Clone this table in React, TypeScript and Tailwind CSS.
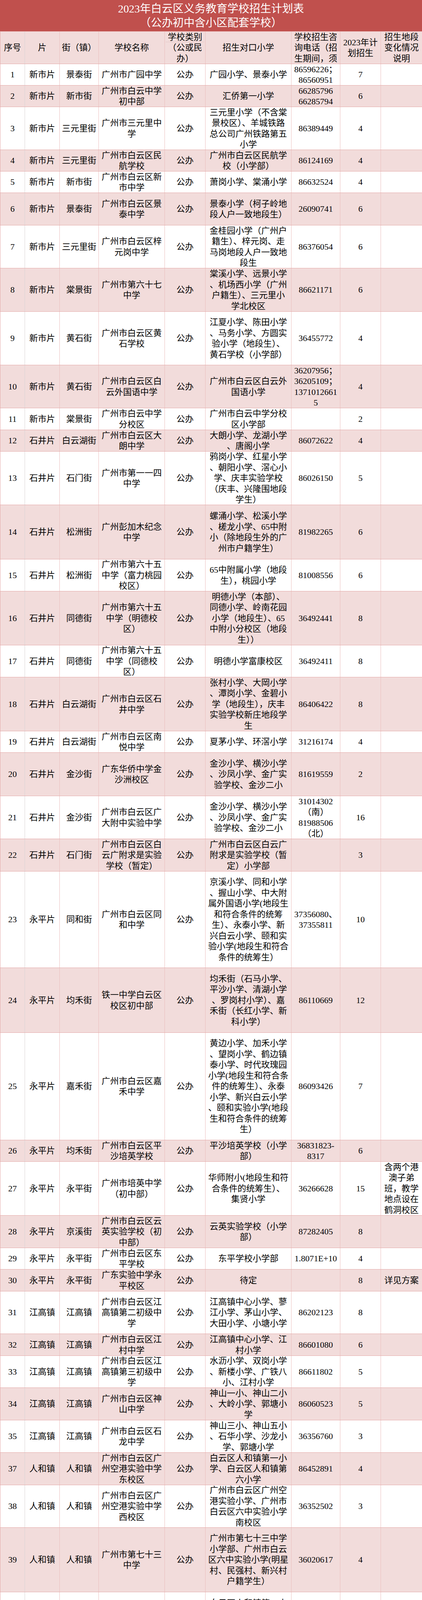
import React from "react";

interface PlanRow {
  n: string;
  p: string;
  j: string;
  s: string;
  f: string;
  t: string;
  c: string;
  note?: string;
  h: string;
}

// lines are split on "|" so the wraps match the sheet exactly
const rows: PlanRow[] = [
  { n: "1", p: "新市片", j: "景泰街", s: "广州市广园中学", f: "广园小学、景泰小学", t: "86596226；|86560951", c: "7", h: "h-[55px]" },
  { n: "2", p: "新市片", j: "新市街", s: "广州市白云中学|初中部", f: "汇侨第一小学", t: "66285796|66285794", c: "6", h: "h-[55px]" },
  { n: "3", p: "新市片", j: "三元里街", s: "广州市三元里中|学", f: "三元里小学（不含棠|景校区）、羊城铁路|总公司广州铁路第五|小学", t: "86389449", c: "4", h: "h-[110px]" },
  { n: "4", p: "新市片", j: "三元里街", s: "广州市白云区民|航学校", f: "广州市白云区民航学|校（小学部）", t: "86124169", c: "4", h: "h-[55px]" },
  { n: "5", p: "新市片", j: "新市街", s: "广州市白云区新|市中学", f: "萧岗小学、棠涌小学", t: "86632524", c: "4", h: "h-[55px]" },
  { n: "6", p: "新市片", j: "景泰街", s: "广州市白云区景|泰中学", f: "景泰小学（柯子岭地|段人户一致地段生）", t: "26090741", c: "6", h: "h-[83px]" },
  { n: "7", p: "新市片", j: "三元里街", s: "广州市白云区梓|元岗中学", f: "金桂园小学（广州户|籍生）、梓元岗、走|马岗地段人户一致地|段生", t: "86376054", c: "6", h: "h-[110px]" },
  { n: "8", p: "新市片", j: "棠景街", s: "广州市第六十七|中学", f: "棠溪小学、远景小学|、机场西小学（广州|户籍生）、三元里小|学北校区", t: "86621171", c: "6", h: "h-[111px]" },
  { n: "9", p: "新市片", j: "黄石街", s: "广州市白云区黄|石学校", f: "江夏小学、陈田小学|、马务小学、方圆实|验小学（地段生）、|黄石学校（小学部）", t: "36455772", c: "4", h: "h-[137px]" },
  { n: "10", p: "新市片", j: "黄石街", s: "广州市白云区白|云外国语中学", f: "广州市白云区白云外|国语小学", t: "36207956；|36205109；|1371012661|5", c: "4", h: "h-[110px]" },
  { n: "11", p: "新市片", j: "棠景街", s: "广州市白云中学|分校区", f: "广州市白云中学分校|区小学部", t: "", c: "2", h: "h-[56px]" },
  { n: "12", p: "石井片", j: "白云湖街", s: "广州市白云区大|朗中学", f: "大朗小学、龙湖小学|、唐阁小学", t: "86072622", c: "4", h: "h-[55px]" },
  { n: "13", p: "石井片", j: "石门街", s: "广州市第一一四|中学", f: "鸦岗小学、红星小学|、朝阳小学、滘心小|学、庆丰实验学校|（庆丰、兴隆围地段|学生）", t: "86026150", c: "5", h: "h-[137px]" },
  { n: "14", p: "石井片", j: "松洲街", s: "广州彭加木纪念|中学", f: "螺涌小学、松溪小学|、槎龙小学、65中附|小（除地段生外的广|州市户籍学生）", t: "81982265", c: "6", h: "h-[139px]" },
  { n: "15", p: "石井片", j: "松洲街", s: "广州市第六十五|中学（富力桃园|校区）", f: "65中附属小学（地段|生），桃园小学", t: "81008556", c: "6", h: "h-[82px]" },
  { n: "16", p: "石井片", j: "同德街", s: "广州市第六十五|中学（明德校|区）", f: "明德小学（本部）、|同德小学、岭南花园|小学（地段生）、65|中附小分校区（地段|生））", t: "36492441", c: "8", h: "h-[138px]" },
  { n: "17", p: "石井片", j: "同德街", s: "广州市第六十五|中学（同德校|区）", f: "明德小学富康校区", t: "36492411", c: "8", h: "h-[82px]" },
  { n: "18", p: "石井片", j: "白云湖街", s: "广州市白云区石|井中学", f: "张村小学、大岡小学|、潭岗小学、金碧小|学（地段生），庆丰|实验学校新庄地段学|生", t: "86406422", c: "8", h: "h-[138px]" },
  { n: "19", p: "石井片", j: "白云湖街", s: "广州市白云区南|悦中学", f: "夏茅小学、环滘小学", t: "31216174", c: "4", h: "h-[55px]" },
  { n: "20", p: "石井片", j: "金沙街", s: "广东华侨中学金|沙洲校区", f: "金沙小学、横沙小学|、沙凤小学、金广实|验学校、金沙二小", t: "81619559", c: "2", h: "h-[111px]" },
  { n: "21", p: "石井片", j: "金沙街", s: "广州市白云区广|大附中实验中学", f: "金沙小学、横沙小学|、沙凤小学、金广实|验学校、金沙二小", t: "31014302|（南）|81988506|（北）", c: "16", h: "h-[110px]" },
  { n: "22", p: "石井片", j: "石门街", s: "广州市白云区白|云广附求是实验|学校（暂定）", f: "广州市白云区白云广|附求是实验学校（暂|定）小学部", t: "", c: "3", h: "h-[83px]" },
  { n: "23", p: "永平片", j: "同和街", s: "广州市白云区同|和中学", f: "京溪小学、同和小学|、握山小学、中大附|属外国语小学(地段生|和符合条件的统筹|生）、永泰小学、新|兴白云小学、颐和实|验小学(地段生和符合|条件的统筹生）", t: "37356080、|37355811", c: "10", h: "h-[247px]" },
  { n: "24", p: "永平片", j: "均禾街", s: "铁一中学白云区|校区初中部", f: "均禾街（石马小学、|平沙小学、清湖小学|、罗岗村小学）、嘉|禾街（长红小学、新|科小学）", t: "86110669", c: "12", h: "h-[166px]" },
  { n: "25", p: "永平片", j: "嘉禾街", s: "广州市白云区嘉|禾中学", f: "黄边小学、加禾小学|、望岗小学、鹤边镇|泰小学、时代玫瑰园|小学(地段生和符合条|件的统筹生）、永泰|小学、新兴白云小学|、颐和实验小学(地段|生和符合条件的统筹|生）", t: "86093426", c: "7", h: "h-[275px]" },
  { n: "26", p: "永平片", j: "均禾街", s: "广州市白云区平|沙培英学校", f: "平沙培英学校（小学|部）", t: "36831823-|8317", c: "6", h: "h-[55px]" },
  { n: "27", p: "永平片", j: "永平街", s: "广州市培英中学|（初中部）", f: "华师附小(地段生和符|合条件的统筹生）、|集贤小学", t: "36266628", c: "15", note: "含两个港|澳子弟|班，教学|地点设在|鹤洞校区", h: "h-[138px]" },
  { n: "28", p: "永平片", j: "京溪街", s: "广州市白云区云|英实验学校（初|中部）", f: "云英实验学校（小学|部）", t: "87282405", c: "8", h: "h-[83px]" },
  { n: "29", p: "永平片", j: "永平街", s: "广州市白云区东|平学校", f: "东平学校小学部", t: "1.8071E+10", c: "4", h: "h-[55px]" },
  { n: "30", p: "永平片", j: "永平街", s: "广东实验中学永|平校区", f: "待定", t: "", c: "8", note: "详见方案", h: "h-[56px]" },
  { n: "31", p: "江高镇", j: "江高镇", s: "广州市白云区江|高镇第二初级中|学", f: "江高镇中心小学、蓼|江小学、茅山小学、|大田小学、小塘小学", t: "86202123", c: "8", h: "h-[109px]" },
  { n: "32", p: "江高镇", j: "江高镇", s: "广州市白云区江|村中学", f: "江高镇中心小学、江|村小学", t: "86601080", c: "6", h: "h-[56px]" },
  { n: "33", p: "江高镇", j: "江高镇", s: "广州市白云区江|高镇第三初级中|学", f: "水沥小学、双岗小学|、新楼小学、广铁八|小、江村小学", t: "86611802", c: "5", h: "h-[82px]" },
  { n: "34", p: "江高镇", j: "江高镇", s: "广州市白云区神|山中学", f: "神山一小、神山二小|、大岭小学、郭塘小|学", t: "86060523", c: "5", h: "h-[83px]" },
  { n: "35", p: "江高镇", j: "江高镇", s: "广州市白云区石|龙中学", f: "神山三小、神山五小|、石华小学、沙龙小|学、郭塘小学", t: "36356760", c: "3", h: "h-[83px]" },
  { n: "37", p: "人和镇", j: "人和镇", s: "广州市白云区广|州空港实验中学|东校区", f: "白云区人和镇第一小|学、白云区人和镇第|六小学", t: "86452891", c: "4", h: "h-[83px]" },
  { n: "38", p: "人和镇", j: "人和镇", s: "广州市白云区广|州空港实验中学|西校区", f: "广州市白云区广州空|港实验小学、广州市|白云区六中实验小学|南校区", t: "36352502", c: "3", h: "h-[109px]" },
  { n: "39", p: "人和镇", j: "人和镇", s: "广州市第七十三|中学", f: "广州市第七十三中学|小学部、广州市白云|区六中实验小学(明星|村、民强村、新兴村|户籍学生）", t: "36020617", c: "4", h: "h-[165px]" },
  { n: "40", p: "人和镇", j: "人和镇", s: "广州市白云区六|中实验中学（空|港校区）", f: "白云区人和镇第二小|学、白云区人和镇第|五小学、白云区人和|镇第七小学、广州市|白云区六中实验小学|(汉塘村户籍学生和除|明星村、民强村、新|兴村、汉塘村外的六|中实验小学北校区广|州市户籍学生）", t: "36033926", c: "7", h: "h-[303px]" },
  { n: "41", p: "人和镇", j: "人和镇", s: "广州市白云区六|中实验中学（福|和校区）", f: "广州市白云区六中实|验小学福和雅苑安置|区地段生", t: "36799662", c: "5", h: "h-[83px]" },
  { n: "42", p: "太和镇", j: "大源街", s: "广州市第一一五|中学", f: "（太和镇第一小学、|太和镇第二小学、谢|家庄小学、头陂小学|、营溪小学、大源小|学、大沥小学、沙亭|岗小学、石湖小学）|部分毕业生，蓝山小|学（部分地段生）", t: "87438422", c: "8", h: "h-[248px]" },
  { n: "43", p: "太和镇", j: "太和镇", s: "广州市白云区穗|丰学校", f: "穗丰学校小学部", t: "87477331", c: "2", h: "h-[55px]" },
  { n: "44", p: "太和镇", j: "太和镇", s: "广州市白云区太|和中学", f: "（太和镇第一小学、|太和镇第二小学、谢|家庄小学、头陂小学|、营溪小学、大源小|学、大沥小学、沙亭|岗小学、石湖小学）|部分毕业生，蓝山小|学（部分地段生）", t: "020-|87421536", c: "6", h: "h-[248px]" },
  { n: "45", p: "太和镇", j: "龙归街", s: "广州市第七十中|学", f: "夏良小学、南村小学|、南园小学", t: "86042967", c: "6", h: "h-[55px]" },
];

const grid =
  "grid grid-cols-[64px_89px_100px_169px_104px_220px_125px_104px_105px]";

// each line gets a fixed height: mixed Latin/CJK fonts would otherwise grow the line box
function Lines({ text }: { text: string }) {
  const lines = text ? text.split("|") : [];
  return (
    <>
      {lines.map((l, i) => (
        <div key={i} className="h-[27.5px] leading-[27.5px] whitespace-nowrap">
          {l}
        </div>
      ))}
    </>
  );
}

function Cell({ text, first, last }: { text: string; first?: boolean; last?: boolean }) {
  return (
    <div
      className={
        "flex flex-col items-center justify-center overflow-hidden " +
        (last
          ? ""
          : first
          ? "border-l border-l-[#e4a9a8] border-r border-r-[#d9d4d4]"
          : "border-r border-[#ebbfbe]")
      }
    >
      <Lines text={text} />
    </div>
  );
}

export default function App() {
  return (
    <div
      className="w-[1080px] h-[5068px] overflow-hidden bg-white text-[22px] leading-[27.5px] text-black"
      style={{ fontFamily: '"Liberation Serif", "Noto Sans CJK SC", serif' }}
    >
      <div className="h-[81px] overflow-hidden bg-[#c0504d] pt-[5px] text-center text-[28px] text-white border-b border-[#e4a9a8]">
        <div className="h-[36px] leading-[36px]">2023年白云区义务教育学校招生计划表</div>
        <div className="h-[36px] leading-[36px]">（公办初中含小区配套学校）</div>
      </div>

      <div className={grid + " h-[83px] bg-[#f2dcdb] border-b border-[#e4a9a8]"}>
        <Cell text="序号" first />
        <Cell text="片" />
        <Cell text="街（镇）" />
        <Cell text="学校名称" />
        <div className="flex flex-col overflow-hidden border-r border-[#ebbfbe]">
          <div className="h-[27px] leading-[27px] mx-[2px] border-b border-[#e4c6c5] text-center">学校类别</div>
          <div className="flex-1 flex flex-col items-center justify-center">
            <Lines text="（公或民|办）" />
          </div>
        </div>
        <Cell text="招生对口小学" />
        <Cell text="学校招生咨|询电话（招|生期间，须" />
        <Cell text="2023年计|划招生" />
        <Cell text="招生地段|变化情况|说明" last />
      </div>

      {rows.map((r, i) => (
        <div
          key={r.n}
          className={
            grid +
            " overflow-hidden border-b border-[#e4a9a8] " +
            r.h +
            (i % 2 === 1 ? " bg-[#f2dcdb]" : " bg-white")
          }
        >
          <Cell text={r.n} first />
          <Cell text={r.p} />
          <Cell text={r.j} />
          <Cell text={r.s} />
          <Cell text="公办" />
          <Cell text={r.f} />
          <Cell text={r.t} />
          <Cell text={r.c} />
          <Cell text={r.note ?? ""} last />
        </div>
      ))}
    </div>
  );
}
